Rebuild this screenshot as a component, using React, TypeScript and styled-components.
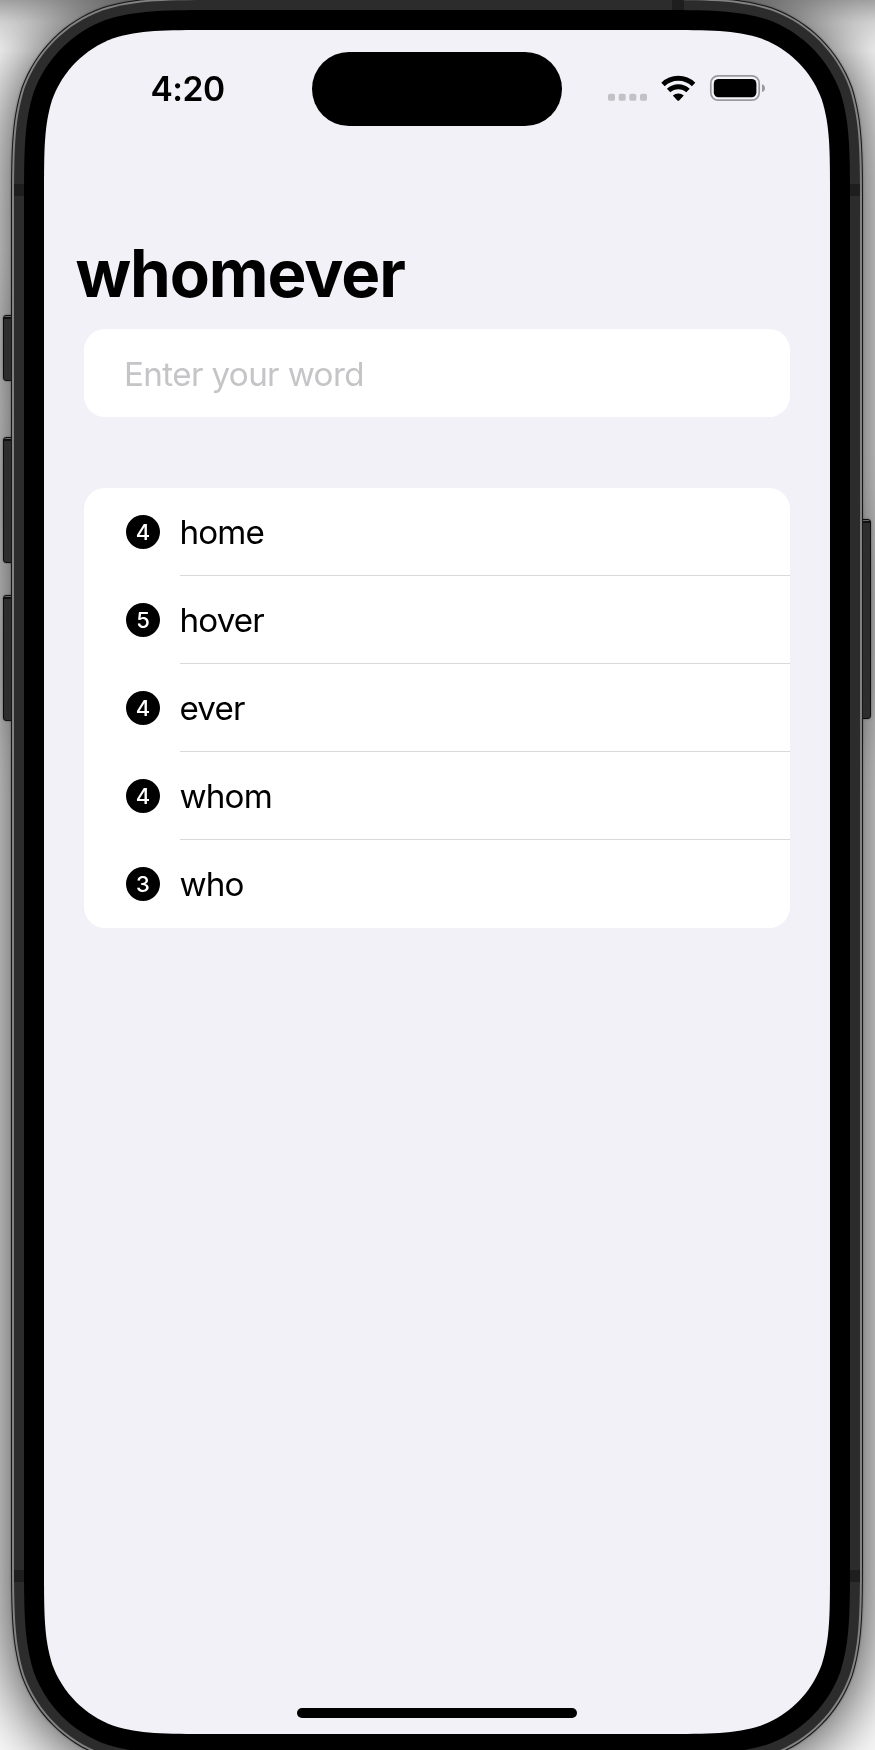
import React from 'react';
import styled, { createGlobalStyle } from 'styled-components';

const GlobalStyle = createGlobalStyle`
  * { box-sizing: border-box; }
  body { margin: 0; background: #fff; font-family: Inter, "Liberation Sans", sans-serif; }
`;

// Continuous-curvature rounded rectangle, as used for device outlines.
const smoothRect = (w: number, h: number, r: number) => {
  const a = 1.52866 * r, b = 1.08849 * r, c = 0.86841 * r;
  const d = 0.63149 * r, e = 0.07491 * r, f = 0.37282 * r, g = 0.16906 * r;
  return [
    `M${a} 0 L${w - a} 0 C${w - b} 0 ${w - c} 0 ${w - d} ${e}`,
    `C${w - f} ${g} ${w - g} ${f} ${w - e} ${d} C${w} ${c} ${w} ${b} ${w} ${a}`,
    `L${w} ${h - a} C${w} ${h - b} ${w} ${h - c} ${w - e} ${h - d}`,
    `C${w - g} ${h - f} ${w - f} ${h - g} ${w - d} ${h - e} C${w - c} ${h} ${w - b} ${h} ${w - a} ${h}`,
    `L${a} ${h} C${b} ${h} ${c} ${h} ${d} ${h - e} C${f} ${h - g} ${g} ${h - f} ${e} ${h - d}`,
    `C0 ${h - c} 0 ${h - b} 0 ${h - a} L0 ${a} C0 ${b} 0 ${c} ${e} ${d}`,
    `C${g} ${f} ${f} ${g} ${d} ${e} C${c} 0 ${b} 0 ${a} 0 Z`,
  ].join(' ');
};

const Stage = styled.main`
  position: relative;
  width: 875px;
  height: 1750px;
  overflow: hidden;
  background: #fff;
`;

const WindowShade = styled.div`
  position: absolute;
  inset: 0 0 auto;
  height: 50px;
  background: linear-gradient(rgba(0, 0, 0, 0.36), rgba(0, 0, 0, 0.14) 45%, transparent);
`;

const Device = styled.div`
  position: relative;
  width: 852px;
  margin: -3px 0 0 11px;
  filter: drop-shadow(0 0 1px rgba(0, 0, 0, 0.35)) drop-shadow(0 4px 36px rgba(0, 0, 0, 0.86));
`;

const Shell = styled.div<{ $inset: number; $pad: number; $bg: string }>`
  position: relative;
  width: ${p => 852 - 2 * p.$inset}px;
  height: ${p => 1770 - 2 * p.$inset}px;
  padding: ${p => p.$pad}px;
  background: ${p => p.$bg};
  clip-path: path('${p => smoothRect(852 - 2 * p.$inset, 1770 - 2 * p.$inset, 143 - p.$inset)}');
`;

const SideButton = styled.div<{ $side: 'left' | 'right'; $top: number; $height: number }>`
  position: absolute;
  ${p => p.$side}: -8px;
  top: ${p => p.$top}px;
  width: 9px;
  height: ${p => p.$height}px;
  border: 1px solid #0c0c0c;
  border-radius: ${p => (p.$side === 'left' ? '3px 0 0 3px' : '0 3px 3px 0')};
  background: linear-gradient(#666 0 1px, #111 1px 3px, #2d2d2d 3px);
`;

const Antenna = styled.div<{ $top: number; $left?: number; $vertical?: boolean }>`
  position: absolute;
  top: ${p => p.$top}px;
  left: ${p => p.$left ?? 0}px;
  width: ${p => (p.$vertical ? 12 : 846)}px;
  height: ${p => (p.$vertical ? 10 : 12)}px;
  background: #1e1e1e;
`;

const ScreenContent = styled.div`
  display: flex;
  flex-direction: column;
  height: 100%;
`;

const StatusBar = styled.header`
  display: grid;
  grid-template-columns: 268px 250px 268px;
  height: 119px;
  padding-top: 22px;
`;

const Clock = styled.time`
  padding: 17px 0 0 106.5px;
  font-size: 33.6px;
  line-height: 40px;
  font-weight: 600;
  letter-spacing: -0.5px;
`;

const Island = styled.div`
  height: 74px;
  border-radius: 37px;
  background: #000;
`;

const StatusIcons = styled.div`
  display: flex;
  align-items: flex-start;
  padding: 23px 0 0 46px;
`;

const Title = styled.h1`
  margin: 85px 0 0 31.5px;
  height: 95px;
  font-size: 65.5px;
  line-height: 80px;
  font-weight: 700;
  letter-spacing: -1.1px;
`;

const Card = styled.section`
  width: 706px;
  margin: 0 auto;
  border-radius: 21px;
  background: #fff;
  overflow: hidden;
`;

const WordInput = styled.input`
  display: block;
  width: 100%;
  height: 88px;
  padding: 1px 40px 0;
  border: 0;
  background: transparent;
  font: 400 33.2px/40px Inter, "Liberation Sans", sans-serif;
  letter-spacing: -0.63px;
  &::placeholder { color: #c5c5c7; opacity: 1; }
`;

const WordCard = styled(Card)`
  margin-top: 71px;
`;

const Row = styled.div`
  display: flex;
  align-items: center;
  height: 88px;
  padding-left: 42px;
`;

const Count = styled.span`
  display: grid;
  place-items: center;
  width: 34px;
  height: 34px;
  margin: 0 19.5px 0 0;
  border-radius: 50%;
  background: #000;
  color: #fff;
  font-size: 22px;
  line-height: 34px;
  font-weight: 550;
`;

const Word = styled.span<{ $divider: boolean }>`
  flex: 1;
  height: 88px;
  padding-top: 1px;
  border-bottom: 1px solid ${p => (p.$divider ? '#d9d9db' : 'transparent')};
  font-size: 33.2px;
  line-height: 86px;
  letter-spacing: -0.85px;
`;

const HomeBar = styled.div`
  width: 280px;
  height: 10px;
  margin: auto auto 16px;
  border-radius: 5px;
  background: #000;
`;

const words = ['home', 'hover', 'ever', 'whom', 'who'];

const StatusGlyphs = () => (
  <StatusIcons>
    <svg width="160" height="27" viewBox="608 75 160 27" fill="none">
      {[608, 618.7, 629.3, 640].map(x => (
        <rect key={x} x={x} y="93.8" width="7" height="7" rx="1.9" fill="#c2c2c6" />
      ))}
      <g stroke="#000" strokeWidth="4.9">
        <path d="M663 84.5a22 22 0 0 1 30.6 0" />
        <path d="M668.6 90.6a14 14 0 0 1 19.4 0" />
      </g>
      <path d="M672.8 95.6a8 8 0 0 1 11 0l-4.6 4.8q-.9.8-1.8 0z" fill="#000" />
      <rect x="710.8" y="75.8" width="48.4" height="24.4" rx="7.4" stroke="#9a9a9e" strokeWidth="1.7" />
      <rect x="713.8" y="78.9" width="42.6" height="18.4" rx="4.8" fill="#000" />
      <path d="M762 84.3q3 1 3 3.9t-3 3.9z" fill="#9a9a9e" />
    </svg>
  </StatusIcons>
);

export default function App() {
  return (
    <Stage>
      <GlobalStyle />
      <WindowShade />
      <Device>
        <SideButton $side="left" $top={318} $height={66} />
        <SideButton $side="left" $top={440} $height={126} />
        <SideButton $side="left" $top={598} $height={126} />
        <SideButton $side="right" $top={522} $height={200} />
        <Shell $inset={0} $pad={1} $bg="#161616">
          <Shell $inset={1} $pad={2} $bg="#828282">
            <Shell $inset={3} $pad={10} $bg="#2c2c2c">
              <Antenna $top={184} />
              <Antenna $top={1570} />
              <Antenna $top={0} $left={658} $vertical />
              <Shell $inset={13} $pad={20} $bg="#000">
                <Shell $inset={33} $pad={0} $bg="#f2f1f8">
                  <ScreenContent>
                    <StatusBar>
                      <Clock>4:20</Clock>
                      <Island />
                      <StatusGlyphs />
                    </StatusBar>
                    <Title>whomever</Title>
                    <Card>
                      <WordInput placeholder="Enter your word" aria-label="Enter your word" />
                    </Card>
                    <WordCard>
                      {words.map((word, i) => (
                        <Row key={word}>
                          <Count>{word.length}</Count>
                          <Word $divider={i < words.length - 1}>{word}</Word>
                        </Row>
                      ))}
                    </WordCard>
                    <HomeBar />
                  </ScreenContent>
                </Shell>
              </Shell>
            </Shell>
          </Shell>
        </Shell>
      </Device>
    </Stage>
  );
}
